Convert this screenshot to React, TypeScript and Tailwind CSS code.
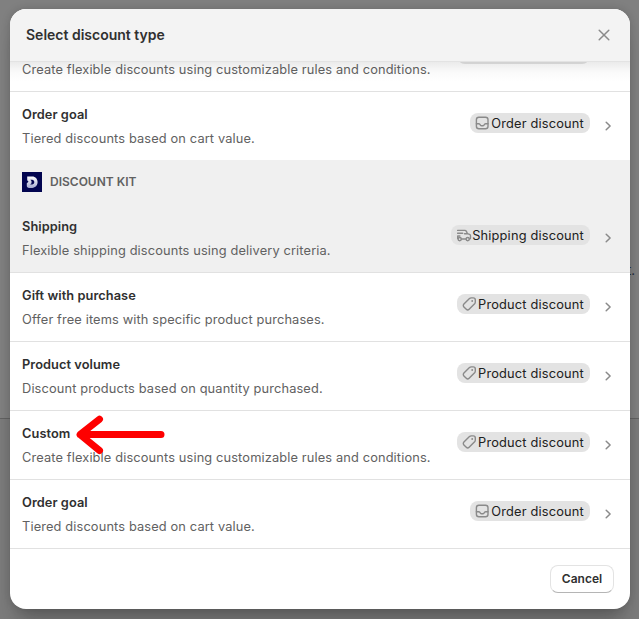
import type { ReactNode } from 'react';

type DiscountKind = 'order' | 'shipping' | 'product';

interface DiscountType {
  title: string;
  description: string;
  kind: DiscountKind;
}

interface DiscountRowProps extends DiscountType {
  highlighted?: boolean;
  children?: ReactNode;
}

const kindLabels: Record<DiscountKind, string> = {
  order: 'Order discount',
  shipping: 'Shipping discount',
  product: 'Product discount',
};

const kitDiscounts: DiscountType[] = [
  { title: 'Gift with purchase', description: 'Offer free items with specific product purchases.', kind: 'product' },
  { title: 'Product volume', description: 'Discount products based on quantity purchased.', kind: 'product' },
  { title: 'Custom', description: 'Create flexible discounts using customizable rules and conditions.', kind: 'product' },
  { title: 'Order goal', description: 'Tiered discounts based on cart value.', kind: 'order' },
];

function KindIcon({ kind }: { kind: DiscountKind }) {
  return (
    <svg
      viewBox="0 0 20 20"
      className="size-5 shrink-0"
      fill="none"
      stroke="#8a8a8a"
      strokeWidth="1.4"
      strokeLinecap="round"
      strokeLinejoin="round"
    >
      {kind === 'order' && (
        <>
          <rect x="4.4" y="4.2" width="11.6" height="11.6" rx="2.5" />
          <path d="M4.4 10.75h2.3c.5 0 .9.25 1.2.65l.5.7c.25.4.7.65 1.2.65h1.2c.5 0 .95-.25 1.2-.65l.5-.7c.3-.4.7-.65 1.2-.65H16" />
        </>
      )}
      {kind === 'shipping' && (
        <>
          <path d="M4.6 5.4h7.2c.7 0 1.3.4 1.6 1l1.1 2.3 2 .7c.6.2 1 .8 1 1.4v2.1c0 .6-.4 1.1-1 1.1M4.6 8.2h5M11.5 8.7h3M4.7 11h2.2M4.7 11v2.5M8.4 14h4.4" />
          <circle cx="6.7" cy="14.1" r="1.6" />
          <circle cx="14.7" cy="14.1" r="1.6" />
        </>
      )}
      {kind === 'product' && (
        <>
          <path d="M10.5 4.6c.5-.5 1.1-.7 1.8-.7h1.9c1.2 0 2.1.9 2.1 2.1v1.9c0 .7-.3 1.3-.7 1.8l-5.5 5.6c-.8.8-2 .8-2.8 0l-2.4-2.4c-.8-.8-.8-2 0-2.8z" />
          <circle cx="13.2" cy="7" r="0.95" fill="#8a8a8a" stroke="none" />
        </>
      )}
    </svg>
  );
}

function Badge({ kind }: { kind: DiscountKind }) {
  return (
    <span className="flex h-5 items-center rounded-lg bg-[#e3e3e3] pr-1.5 pl-0.5 text-[12.8px] leading-5 font-normal tracking-[0.19px] text-[#202020]">
      <KindIcon kind={kind} />
      <span className="-ml-[0.5px] pt-px">{kindLabels[kind]}</span>
    </span>
  );
}

function DiscountRow({ title, description, kind, highlighted, children }: DiscountRowProps) {
  return (
    <div
      className={`relative flex h-[69px] shrink-0 justify-between border-b border-[#e1e1e1] px-3 ${highlighted ? 'bg-[#f0f0f0]' : ''}`}
    >
      <div className="pt-[13px]">
        <h3 className="text-[12.8px] leading-5 font-[600] tracking-[0.06px] text-[#303030]">{title}</h3>
        <p className="mt-1 text-[12.8px] leading-5 tracking-[0.14px] text-[#616161]">{description}</p>
      </div>
      <div className="flex gap-2 pt-[21px]">
        <Badge kind={kind} />
        <svg viewBox="0 0 20 20" className="mt-[3px] size-5" fill="none" stroke="#8a8a8a" strokeWidth="1.5" strokeLinecap="round" strokeLinejoin="round">
          <path d="M8.2 6.2 12.1 10l-3.9 3.8" />
        </svg>
      </div>
      {children}
    </div>
  );
}

function Arrow() {
  return (
    <svg viewBox="0 0 90 40" className="absolute top-1 left-16 h-10 w-[91px]" fill="none" stroke="#fe0000" strokeWidth="7" strokeLinecap="round" strokeLinejoin="round">
      <path d="M86.5 19.6H5.6L25 4.2M5.6 19.6 25 35.5" />
    </svg>
  );
}

function KitLogo() {
  return (
    <svg viewBox="0 0 20 20" className="size-5">
      <defs>
        <linearGradient id="kit" x1="0" y1="0" x2="0" y2="1">
          <stop offset="0" stopColor="#ffffff" />
          <stop offset="1" stopColor="#a7acd2" />
        </linearGradient>
      </defs>
      <rect width="20" height="20" fill="#020550" />
      <path
        fill="url(#kit)"
        fillRule="evenodd"
        d="M5.2 4.4h5c3.2 0 5.4 2.3 5.4 5.7s-2.2 5.8-5.4 5.8H7.1c-1.4 0-2.3-.9-2.3-2.2V11.2L6.5 9.7 5.2 8.3zM8.3 7.7l1.2 1.2v2.4l-1.4 1.2h2c1.3 0 2.2-1 2.2-2.4s-.9-2.4-2.2-2.4z"
      />
    </svg>
  );
}

export default function App() {
  return (
    <div className="relative h-[619px] w-[639px] overflow-hidden bg-[#808080] font-['Inter',sans-serif]">
      <div className="absolute top-[418px] left-0 h-px w-full bg-[#626262]" />
      <div className="absolute top-[419px] left-0 h-[200px] w-full bg-[#7b7b7b]" />
      <span className="absolute top-[260px] right-1 text-[13px] leading-5 text-[#222b3a]">t.</span>

      <div className="absolute top-[9px] left-2.5 flex h-[600px] w-[620px] flex-col overflow-hidden rounded-2xl bg-white shadow-[0_20px_20px_-8px_rgba(26,26,26,0.28),0_0_9px_rgba(26,26,26,0.22)]">
        <header className="relative z-10 flex h-[53px] shrink-0 items-center justify-between border-b border-[#e3e3e3] bg-[#f3f3f3] px-4">
          <h2 className="text-sm leading-5 font-[600] text-[#303030]">Select discount type</h2>
          <svg viewBox="0 0 20 20" className="size-5" fill="none" stroke="#8a8a8a" strokeWidth="1.5" strokeLinecap="round">
            <path d="m5.2 5.2 9.6 9.6M14.8 5.2l-9.6 9.6" />
          </svg>
        </header>

        <main className="relative flex h-[487px] shrink-0 flex-col justify-end overflow-hidden">
          <DiscountRow title="Custom" description="Create flexible discounts using customizable rules and conditions." kind="product" />
          <DiscountRow title="Order goal" description="Tiered discounts based on cart value." kind="order" />
          <div className="relative -mt-px flex h-11 shrink-0 items-center gap-2 bg-[#f0f0f0] px-3">
            <KitLogo />
            <span className="text-xs font-[600] text-[#616161]">DISCOUNT KIT</span>
          </div>
          <DiscountRow title="Shipping" description="Flexible shipping discounts using delivery criteria." kind="shipping" highlighted />
          {kitDiscounts.map((item) => (
            <DiscountRow key={item.title} {...item}>
              {item.title === 'Custom' && <Arrow />}
            </DiscountRow>
          ))}
          <div className="absolute inset-x-0 top-0 h-5 bg-linear-to-b from-black/8 via-black/2 to-transparent" />
        </main>

        <footer className="flex flex-1 items-center justify-end px-4">
          <button className="h-7 w-16 rounded-lg border border-[#e3e3e3] border-b-[#b5b5b5] bg-white text-xs font-[600] text-[#303030]">
            Cancel
          </button>
        </footer>
      </div>
    </div>
  );
}
